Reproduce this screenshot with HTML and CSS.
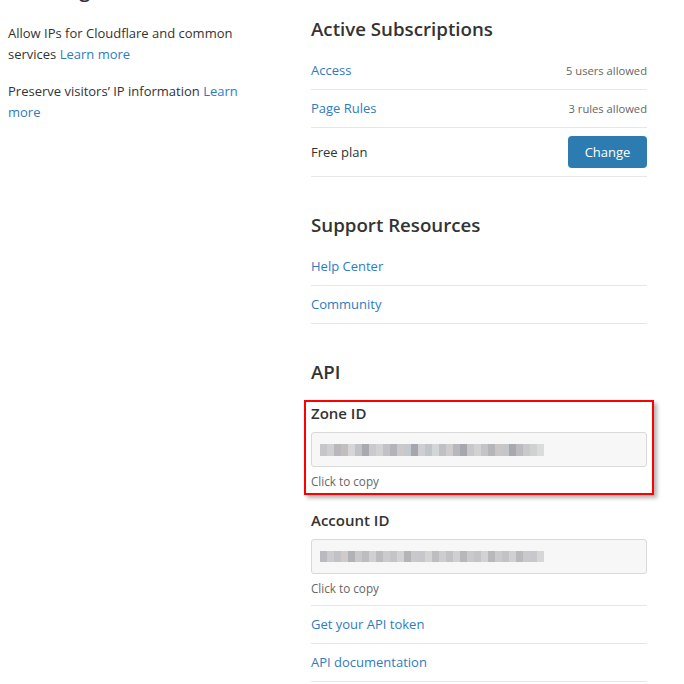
FILE: index.html
```html
<!DOCTYPE html>
<html lang="en">
<head>
<meta charset="utf-8">
<title>Overview</title>
<link rel="stylesheet" href="styles.css">
</head>
<body>
<div class="page">
  <aside class="left">
    <h2 class="left-title">Tracking</h2>
    <p class="note">Allow IPs for Cloudflare and common services <a href="#">Learn more</a></p>
    <p class="note">Preserve visitors’ IP information <a href="#">Learn more</a></p>
  </aside>

  <main class="right">
    <section class="block">
      <h2 class="title">Active Subscriptions</h2>
      <ul class="list">
        <li class="row"><a href="#">Access</a><span class="meta">5 users allowed</span></li>
        <li class="row"><a href="#">Page Rules</a><span class="meta">3 rules allowed</span></li>
        <li class="row row-btn"><span>Free plan</span><button class="btn" type="button">Change</button></li>
      </ul>
    </section>

    <section class="block">
      <h2 class="title">Support Resources</h2>
      <ul class="list">
        <li class="row"><a href="#">Help Center</a></li>
        <li class="row"><a href="#">Community</a></li>
      </ul>
    </section>

    <section class="block">
      <h2 class="title">API</h2>
      <div class="field field-zone">
        <div class="label">Zone ID</div>
        <div class="idbox"><span class="blur blur-zone"></span></div>
        <div class="hint">Click to copy</div>
      </div>
      <div class="field field-account">
        <div class="label">Account ID</div>
        <div class="idbox"><span class="blur blur-account"></span></div>
        <div class="hint">Click to copy</div>
      </div>
      <ul class="list">
        <li class="row"><a href="#">Get your API token</a></li>
        <li class="row"><a href="#">API documentation</a></li>
      </ul>
    </section>
  </main>
</div>
</body>
</html>
```

FILE: styles.css
```css
* { box-sizing: border-box; }

html, body {
  margin: 0;
  padding: 0;
  background: #fff;
}

body {
  font-family: "Open Sans", "Noto Sans", sans-serif;
  font-size: 13px;
  line-height: 21px;
  color: #333;
  overflow: hidden;
}

a {
  color: #2f7bbf;
  text-decoration: none;
}

.page {
  display: flex;
  align-items: flex-start;
  gap: 53px;
  padding-left: 8px;
}

.left {
  width: 250px;
  flex: none;
}

.left-title {
  margin: -22px 0 21px;
  font-size: 20px;
  line-height: 24px;
  font-weight: 600;
  color: #333;
}

.note {
  margin: 0 0 16px;
}

.right {
  width: 336px;
  flex: none;
  padding-top: 17px;
}

.block + .block {
  margin-top: 36px;
}

.title {
  margin: 0 0 11px;
  font-size: 18.7px;
  line-height: 24px;
  font-weight: 600;
  color: #333;
}

.list {
  list-style: none;
  margin: 0;
  padding: 0;
}

.row {
  display: flex;
  align-items: center;
  justify-content: space-between;
  padding: 8px 0;
  border-bottom: 1px solid #e6e6e6;
  min-height: 38px;
}

.meta {
  font-size: 11.2px;
  color: #666;
}

.btn {
  font-family: inherit;
  font-size: 13px;
  line-height: 20px;
  color: #fff;
  background: #2c7cb2;
  border: 0;
  border-radius: 4px;
  width: 79px;
  height: 32px;
  padding: 0;
}

.field {
  position: relative;
  padding: 8px 0 8px;
}

.field-account {
  padding-top: 12px;
  border-bottom: 1px solid #e6e6e6;
}

.field-zone::after {
  content: "";
  position: absolute;
  left: -7px;
  right: -7px;
  top: 5px;
  bottom: 3px;
  border: 2px solid #ff0000;
  box-shadow: 3px 3px 4px rgba(0, 0, 0, 0.3);
  pointer-events: none;
}

.label {
  font-size: 15px;
  line-height: 20px;
  font-weight: 600;
  color: #333;
}

.idbox {
  margin-top: 9px;
  height: 35px;
  background: #f7f7f7;
  border: 1px solid #d9d9d9;
  border-radius: 3px;
  display: flex;
  align-items: center;
  padding-left: 8px;
}

.blur {
  display: block;
  height: 12px;
  width: 224px;
}

.blur-zone {
  background:
    linear-gradient(90deg,
      #c6c6ca 0 7px, #cfcfd2 7px 14px, #b9b9bd 14px 21px, #c4bfbf 21px 28px,
      #d6d6d8 28px 35px, #bfc3c7 35px 42px, #a9aab0 42px 49px, #c9cacd 49px 56px,
      #d2d2d4 56px 63px, #c2c2c6 63px 70px, #b3b4ba 70px 77px, #cbc9c9 77px 84px,
      #c4c9cf 84px 91px, #a4a7ad 91px 98px, #cfcfd2 98px 105px, #c0c5c9 105px 112px,
      #d3d6d8 112px 119px, #bfc0c4 119px 126px, #cecccc 126px 133px, #b6b8bd 133px 140px,
      #a6a8ae 140px 147px, #c8c8cb 147px 154px, #d2d2d2 154px 161px, #c4c4c8 161px 168px,
      #b5b5ba 168px 175px, #cac6c6 175px 182px, #c4c6c9 182px 189px, #a7a9ae 189px 196px,
      #bcbcc0 196px 203px, #c9c9cc 203px 210px, #d0d2d2 210px 217px, #d8dcdc 217px 224px);
}

.blur-account {
  height: 11px;
  background:
    linear-gradient(90deg,
      #b9b9bf 0 7px, #cbcbce 7px 14px, #c2c2c6 14px 21px, #d0caca 21px 28px,
      #b1b1b6 28px 35px, #c8c8cb 35px 42px, #bdbdc1 42px 49px, #d0d0d0 49px 56px,
      #bbbbc0 56px 63px, #cbcbcd 63px 70px, #c4c3c7 70px 77px, #d2d2d2 77px 84px,
      #b3b3b8 84px 91px, #c9c9cc 91px 98px, #c5c7cb 98px 105px, #d3d3d3 105px 112px,
      #bdbdc2 112px 119px, #cdcdcf 119px 126px, #c2c2c6 126px 133px, #d0d0d0 133px 140px,
      #b6b6bb 140px 147px, #c9c9cc 147px 154px, #c4c4c8 154px 161px, #d2d2d2 161px 168px,
      #b7b7bc 168px 175px, #cacacd 175px 182px, #c3c3c7 182px 189px, #d0d0d0 189px 196px,
      #b9b9be 196px 203px, #c9c9cc 203px 210px, #c8c8cc 210px 217px, #d6d6d6 217px 224px);
}

.hint {
  margin-top: 6px;
  font-size: 11.7px;
  line-height: 17px;
  color: #666;
}
```
